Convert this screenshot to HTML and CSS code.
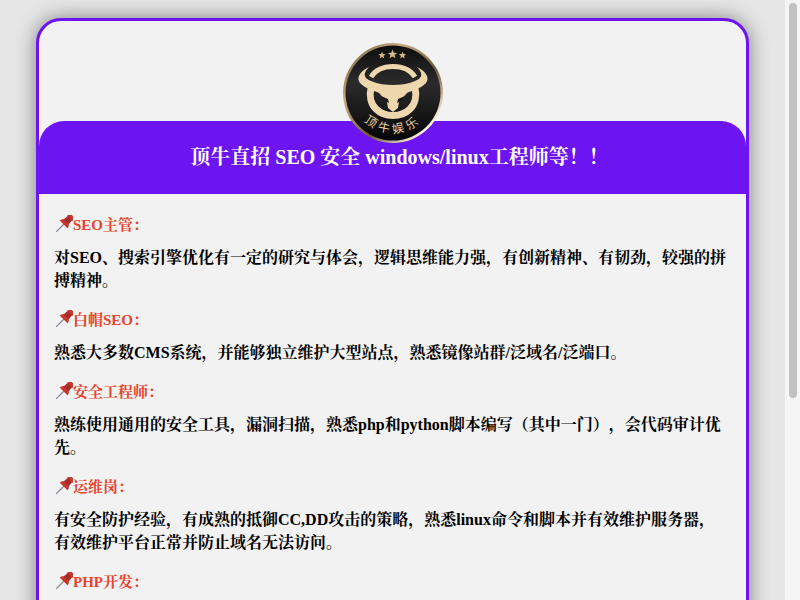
FILE: index.html
```html
<!DOCTYPE html>
<html lang="zh-CN">
<head>
  <meta charset="UTF-8">
  <meta name="viewport" content="width=device-width, initial-scale=1.0">
  <title>顶牛直招</title>
  <link rel="stylesheet" href="styles.css">
</head>
<body>
  <svg class="icon-defs">
    <symbol id="pin" viewBox="0 0 18 18">
      <g transform="translate(10 8) rotate(45)">
        <path stroke="#848b96" stroke-width="1.3" d="M0 0V12.5"/>
        <path fill="#c8352c" d="M-5.5 2C-5.5-.5-3.5-2-3-2H3C3.500-2 5.500-.5 5.500 2z"/>
        <path fill="#a82c2a" d="M-3-8H3L3.500-1.500H-3.500z"/>
        <rect fill="#c4382f" x="-4.500" y="-10.500" width="9" height="3.600" rx="1.600"/>
      </g>
    </symbol>
  </svg>
  <div class="page">
    <div class="card">
      <div class="logo-area">
        <svg class="logo" viewBox="0 0 102 102" width="102" height="102" role="img" aria-label="顶牛娱乐">
          <defs>
            <linearGradient id="rim" x1="0" y1="0" x2="1" y2="1">
              <stop offset="0" stop-color="#5e4c30"/>
              <stop offset="0.3" stop-color="#c9ae80"/>
              <stop offset="0.6" stop-color="#6d5636"/>
              <stop offset="0.85" stop-color="#fff6e0"/>
              <stop offset="1" stop-color="#a98c5e"/>
            </linearGradient>
            <linearGradient id="disc" x1="0" y1="0" x2="0" y2="1">
              <stop offset="0" stop-color="#0e0e0e"/>
              <stop offset="0.4" stop-color="#2b2b2b"/>
              <stop offset="0.75" stop-color="#151515"/>
              <stop offset="1" stop-color="#050505"/>
            </linearGradient>
            <path id="ring-text" d="M11 51 A40 40 0 0 0 91 51"/>
          </defs>
          <circle cx="51" cy="51" r="50" fill="url(#rim)"/>
          <circle cx="51" cy="51" r="47.5" fill="url(#disc)"/>
          <g fill="#d3b98a">
            <path d="M40 9.5l1 2.6 2.7.1-2.1 1.7.7 2.6-2.3-1.5-2.3 1.5.7-2.6-2.1-1.7 2.7-.1z"/>
            <path d="M50.5 7.5l1.3 3.2 3.4.2-2.6 2.1.9 3.3-3-1.8-3 1.8.9-3.3-2.6-2.1 3.4-.2z"/>
            <path d="M60.5 9.5l1 2.6 2.7.1-2.1 1.7.7 2.6-2.3-1.5-2.3 1.5.7-2.6-2.1-1.7 2.7-.1z"/>
          </g>
          <g fill="none" stroke="#eed7ad">
            <path stroke-width="5" d="M29 35 C34 27 42 24.5 51 24.5 S68 27 73 35"/>
            <path stroke-width="7" d="M29 46 C27 54 29 62 34 67 C38 71 44 73.5 51 73.5 C58 73.5 64 71 68 67 C73 62 75 54 73 46"/>
          </g>
          <path fill="#eed7ad" d="M27 25 C21 31 21 36 29 39 C36 42 44 43 51 43 C58 43 66 42 73 39 C81 36 81 31 75 25 C84 29 88 36 84 41 C79 47 66 50 65 51 L57 60 L56 66 L51 70 L46 66 L45 60 L37 51 C36 50 23 47 18 41 C14 36 18 29 27 25z"/>
          <g fill="#191919">
            <path d="M39 54 L46 57 L47 61 L43 59z"/>
            <path d="M63 54 L56 57 L55 61 L59 59z"/>
          </g>
          <text class="logo-text"><textPath href="#ring-text" startOffset="50%" text-anchor="middle">顶牛娱乐</textPath></text>
        </svg>
      </div>
      <h1 class="banner">顶牛直招 SEO 安全 windows/linux工程师等！！</h1>
      <div class="jobs">
        <h3 class="job-title"><svg class="pin"><use href="#pin"/></svg>SEO主管：</h3>
        <p class="job-text">对SEO、搜索引擎优化有一定的研究与体会，逻辑思维能力强，有创新精神、有韧劲，较强的拼搏精神。</p>
        <h3 class="job-title"><svg class="pin"><use href="#pin"/></svg>白帽SEO：</h3>
        <p class="job-text">熟悉大多数CMS系统，并能够独立维护大型站点，熟悉镜像站群/泛域名/泛端口。</p>
        <h3 class="job-title"><svg class="pin"><use href="#pin"/></svg>安全工程师：</h3>
        <p class="job-text">熟练使用通用的安全工具，漏洞扫描，熟悉php和python脚本编写（其中一门），会代码审计优先。</p>
        <h3 class="job-title"><svg class="pin"><use href="#pin"/></svg>运维岗：</h3>
        <p class="job-text">有安全防护经验，有成熟的抵御CC,DD攻击的策略，熟悉linux命令和脚本并有效维护服务器，有效维护平台正常并防止域名无法访问。</p>
        <h3 class="job-title"><svg class="pin"><use href="#pin"/></svg>PHP开发：</h3>
      </div>
    </div>
    <div class="scrollbar"><div class="scrollbar-thumb"></div></div>
  </div>
</body>
</html>
```
FILE: styles.css
```css
html, body {
  height: 100%;
}
body {
  font-family: "Liberation Serif", "Noto Serif CJK SC", "Noto Sans CJK SC", serif;
  font-weight: bold;
  margin: 0;
  overflow: hidden;
  background-color: #e6e6e6;
  text-spacing-trim: space-all;
}
.icon-defs {
  display: none;
}
.page {
  display: flex;
  height: 600px;
  overflow: hidden;
}
.card {
  flex: none;
  width: 707px;
  height: 640px;
  margin: 18px 36px 0;
  background-color: #f2f2f2;
  border: 3px solid #6c14f2;
  border-radius: 25px;
  box-shadow: 0 0 20px rgba(0, 0, 0, 0.45);
}
.scrollbar {
  flex: none;
  width: 15px;
  height: 600px;
  padding: 3px 3px 0 4px;
  box-sizing: border-box;
  background-color: #f5f5f5;
}
.scrollbar-thumb {
  height: 395px;
  background-color: #c1c1c1;
  border-radius: 4px;
}
.logo-area {
  display: flex;
  justify-content: center;
  height: 100px;
  padding-top: 21px;
  box-sizing: border-box;
}
.logo {
  position: relative;
  z-index: 1;
  flex: none;
}
.logo-text {
  font-family: "Noto Sans CJK SC", sans-serif;
  font-size: 12px;
  font-weight: normal;
  letter-spacing: 4px;
  fill: #e6cfa3;
}
.banner {
  margin: 0;
  height: 73px;
  padding: 23px 0 0 14px;
  box-sizing: border-box;
  background-color: #6c14f2;
  border-radius: 25px 25px 0 0;
  color: #fff;
  font-size: 20px;
  line-height: 27px;
  text-align: center;
}
.jobs {
  padding: 20px 16px 20px;
}
.job-title {
  margin: 0;
  color: #e8432e;
  font-size: 15px;
  line-height: 22px;
}
.pin {
  width: 18px;
  height: 18px;
  vertical-align: -3px;
}
.job-text {
  margin: 10px 0 17px -1px;
  color: #000;
  font-size: 16px;
  line-height: 23px;
}
```
